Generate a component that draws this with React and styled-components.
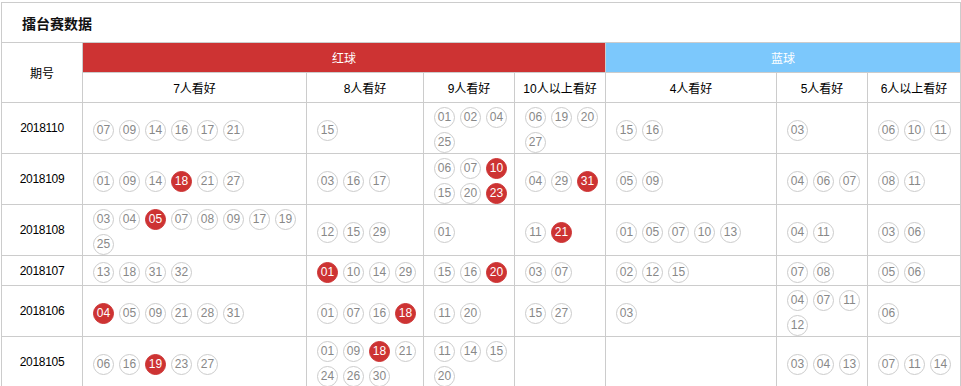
import React from "react";
import styled, { createGlobalStyle, css } from "styled-components";

const GlobalStyle = createGlobalStyle`
  html, body {
    margin: 0;
    padding: 0;
    overflow: hidden;
    background: #fff;
    font-family: "Liberation Sans", "Noto Sans CJK SC", sans-serif;
    font-size: 12px;
    color: #000;
  }
`;

const Page = styled.div`
  padding: 2px 0 0 1px;
`;

const Panel = styled.section`
  width: 958px;
  border: 1px solid #ccc;
`;

const Title = styled.h2`
  margin: 0;
  height: 39px;
  border-bottom: 1px solid #ccc;
  display: flex;
  align-items: center;
  padding-left: 20px;
  font-size: 14px;
  font-weight: bold;
  color: #111;
  font-family: "Noto Sans CJK SC", sans-serif;
`;

const Grid = styled.div`
  display: grid;
  grid-template-columns: 80px 223px 116px 90px 90px 170px 90px 92px;
  grid-auto-rows: minmax(29px, auto);
  gap: 1px;
  background: #ccc;
`;

const HeadCell = styled.div`
  background: #fff;
  display: flex;
  align-items: center;
  justify-content: center;
  font-size: 12px;
  ${(p) => p.$rowSpan && css`grid-row: span ${p.$rowSpan};`}
`;

const Band = styled.div`
  grid-column: span ${(p) => p.$span};
  background: ${(p) => (p.$tone === "red" ? "#cd3333" : "#7cc8fc")};
  color: #fff;
  display: flex;
  align-items: center;
  justify-content: center;
  font-size: 12px;
`;

const IssueCell = styled.div`
  background: #fff;
  display: flex;
  align-items: center;
  justify-content: center;
  font-size: 12px;
  letter-spacing: -0.3px;
`;

const BallCell = styled.div`
  background: #fff;
  display: flex;
  flex-wrap: wrap;
  align-content: center;
  padding: 0 5px;
`;

const Ball = styled.span`
  box-sizing: border-box;
  width: 21px;
  height: 21px;
  margin: 4px 0 0 5px;
  border-radius: 50%;
  border: 1px solid ${(p) => (p.$hit ? "#cd3333" : "#ccc")};
  background: ${(p) => (p.$hit ? "#cd3333" : "#fff")};
  color: ${(p) => (p.$hit ? "#fff" : "#888")};
  font-size: 12px;
  line-height: 19px;
  text-align: center;
`;

const columns = ["7人看好", "8人看好", "9人看好", "10人以上看好", "4人看好", "5人看好", "6人以上看好"];

// "*" marks a hit (red) ball
const rows = [
  {
    issue: "2018110",
    cells: [
      "07 09 14 16 17 21",
      "15",
      "01 02 04 25",
      "06 19 20 27",
      "15 16",
      "03",
      "06 10 11",
    ],
  },
  {
    issue: "2018109",
    cells: [
      "01 09 14 18* 21 27",
      "03 16 17",
      "06 07 10* 15 20 23*",
      "04 29 31*",
      "05 09",
      "04 06 07",
      "08 11",
    ],
  },
  {
    issue: "2018108",
    cells: [
      "03 04 05* 07 08 09 17 19 25",
      "12 15 29",
      "01",
      "11 21*",
      "01 05 07 10 13",
      "04 11",
      "03 06",
    ],
  },
  {
    issue: "2018107",
    cells: [
      "13 18 31 32",
      "01* 10 14 29",
      "15 16 20*",
      "03 07",
      "02 12 15",
      "07 08",
      "05 06",
    ],
  },
  {
    issue: "2018106",
    cells: [
      "04* 05 09 21 28 31",
      "01 07 16 18*",
      "11 20",
      "15 27",
      "03",
      "04 07 11 12",
      "06",
    ],
  },
  {
    issue: "2018105",
    cells: [
      "06 16 19* 23 27",
      "01 09 18* 21 24 26 30",
      "11 14 15 20",
      "",
      "",
      "03 04 13",
      "07 11 14",
    ],
  },
];

function Balls({ spec }) {
  const items = spec ? spec.split(" ") : [];
  return (
    <BallCell>
      {items.map((n, i) => {
        const hit = n.endsWith("*");
        return (
          <Ball key={i} $hit={hit}>
            {hit ? n.slice(0, -1) : n}
          </Ball>
        );
      })}
    </BallCell>
  );
}

export default function App() {
  return (
    <Page>
      <GlobalStyle />
      <Panel>
        <Title>擂台赛数据</Title>
        <Grid>
          <HeadCell $rowSpan={2}>期号</HeadCell>
          <Band $span={4} $tone="red">红球</Band>
          <Band $span={3} $tone="blue">蓝球</Band>
          {columns.map((c) => (
            <HeadCell key={c}>{c}</HeadCell>
          ))}
          {rows.map((r) => (
            <React.Fragment key={r.issue}>
              <IssueCell>{r.issue}</IssueCell>
              {r.cells.map((c, i) => (
                <Balls key={i} spec={c} />
              ))}
            </React.Fragment>
          ))}
        </Grid>
      </Panel>
    </Page>
  );
}
